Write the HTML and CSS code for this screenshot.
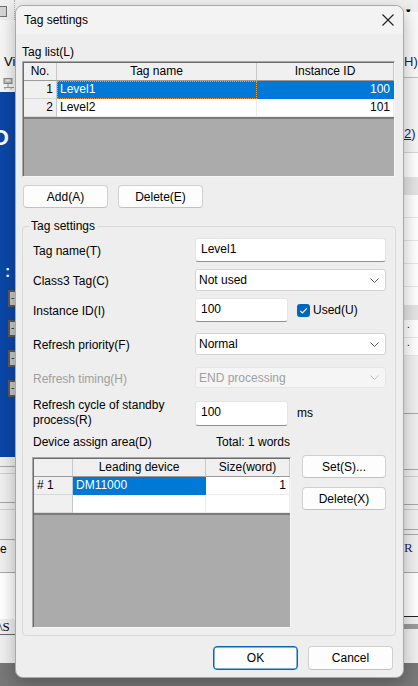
FILE: index.html
```html
<!DOCTYPE html>
<html lang="en">

<head>
  <meta charset="UTF-8" />
  <meta name="viewport" content="width=device-width, initial-scale=1.0" />
  <title>Tag settings</title>
  <link rel="stylesheet" href="styles.css">
</head>

<body>
  <div class="desk">
    <!-- main window behind the dialog, only the edges show -->
    <div class="side-left">
      <div class="l-top"><span class="l-icon"></span></div>
      <div class="l-menu">
        <div class="l-vi">Vi</div>
        <svg class="l-tool" width="12" height="12" viewBox="0 0 12 12">
          <rect x="1" y="0.5" width="8" height="5" fill="#b8b8b8" stroke="#8a8a8a" />
          <rect x="2.5" y="1.5" width="5" height="2" fill="#e6e6e6" />
          <path d="M5 6v3M1 9.5h10M2 9.5v2M8 9.5v2" stroke="#9a9a9a" fill="none" />
        </svg>
      </div>
      <div class="l-blue">
        <div class="l-title">D [</div>
        <div class="l-colon">:</div>
        <div class="l-box">-</div>
        <div class="l-box">-</div>
        <div class="l-box">-</div>
        <div class="l-box">-</div>
      </div>
      <div class="l-panel">
        <div class="band h10 line"></div>
        <div class="band h7 line-light"></div>
        <div class="band h29 line"></div>
        <div class="band h7 line-light"></div>
        <div class="band h30 line"></div>
        <div class="band h33 line l-e">e</div>
        <div class="band h46 white"></div>
        <div class="band h16 l-tab"><span>\S</span></div>
        <div class="band rest"></div>
      </div>
      <div class="foot"></div>
    </div>

    <div class="middle">
      <div class="m-top"></div>
      <div class="foot"></div>
    </div>

    <div class="side-right">
      <div class="r-top">&#9662;</div>
      <div class="r-a">H)</div>
      <div class="r-b"><u>2</u>)</div>
      <div class="band h25 white line-soft"></div>
      <div class="band h17 grey"></div>
      <div class="band h23 white line-soft"></div>
      <div class="band h23 white line-soft"></div>
      <div class="band h23 white line-soft"></div>
      <div class="band h23 white line-soft"></div>
      <div class="band h18 white"></div>
      <div class="band h15 grey"></div>
      <div class="band h18 white line-soft r-dot">.</div>
      <div class="band h18 white line-soft r-dot">.</div>
      <div class="band h58 line"></div>
      <div class="band h56 line"></div>
      <div class="band h7 line-light"></div>
      <div class="band h28 line"></div>
      <div class="band h5 line-light"></div>
      <div class="band h20 line"></div>
      <div class="band h5 line"></div>
      <div class="band h38 line r-r">R</div>
      <div class="band h44 white line-black"></div>
      <div class="band h7"></div>
      <div class="band h5 grey-dark"></div>
      <div class="band rest"></div>
      <div class="foot"></div>
    </div>

    <div class="dialog">
      <div class="titlebar">
        <span>Tag settings</span>
        <svg width="12" height="12" viewBox="0 0 12 12">
          <path d="M0.5 0.5L11.5 11.5M11.5 0.5L0.5 11.5" stroke="#1f1f1f" stroke-width="1.1" fill="none" />
        </svg>
      </div>

      <div class="dlg-body">
        <div class="caption">Tag list(L)</div>
        <div class="list tag-list">
          <div class="grid">
            <div class="gh">No.</div>
            <div class="gh">Tag name</div>
            <div class="gh">Instance ID</div>
            <div class="gn">1</div>
            <div class="gc sel focus">Level1</div>
            <div class="gc sel num">100</div>
            <div class="gn">2</div>
            <div class="gc">Level2</div>
            <div class="gc num">101</div>
          </div>
        </div>

        <div class="btn-row">
          <button class="btn">Add(A)</button>
          <button class="btn">Delete(E)</button>
        </div>

        <fieldset class="group">
          <legend>Tag settings</legend>

          <div class="form-row row-name">
            <label>Tag name(T)</label>
            <input class="text" type="text" value="Level1">
          </div>

          <div class="form-row row-class">
            <label>Class3 Tag(C)</label>
            <div class="combo">
              <span>Not used</span>
              <svg width="9" height="5" viewBox="0 0 9 5"><path d="M0.5 0.5L4.5 4.5L8.5 0.5" stroke="#5a5a5a" fill="none" /></svg>
            </div>
          </div>

          <div class="form-row row-id">
            <label>Instance ID(I)</label>
            <div class="inline">
              <input class="text short" type="text" value="100">
              <span class="check">
                <svg width="13" height="13" viewBox="0 0 13 13">
                  <rect width="13" height="13" rx="3" fill="#0067c0" />
                  <path d="M3.3 6.8L5.4 8.9L9.8 4.3" stroke="#fff" stroke-width="1.1" fill="none" />
                </svg>
              </span>
              <span>Used(U)</span>
            </div>
          </div>

          <div class="form-row row-prio">
            <label>Refresh priority(F)</label>
            <div class="combo">
              <span>Normal</span>
              <svg width="9" height="5" viewBox="0 0 9 5"><path d="M0.5 0.5L4.5 4.5L8.5 0.5" stroke="#5a5a5a" fill="none" /></svg>
            </div>
          </div>

          <div class="form-row row-timing">
            <label class="disabled">Refresh timing(H)</label>
            <div class="combo off">
              <span>END processing</span>
              <svg width="9" height="5" viewBox="0 0 9 5"><path d="M0.5 0.5L4.5 4.5L8.5 0.5" stroke="#c2c2c2" fill="none" /></svg>
            </div>
          </div>

          <div class="form-row row-cycle">
            <label>Refresh cycle of standby<br>process(R)</label>
            <div class="inline">
              <input class="text short tall" type="text" value="100">
              <span class="unit">ms</span>
            </div>
          </div>

          <div class="device-head">
            <span class="dh-label">Device assign area(D)</span>
            <span>Total: 1 words</span>
          </div>

          <div class="device-row">
            <div class="list dev-list">
              <div class="grid">
                <div class="gh"></div>
                <div class="gh">Leading device</div>
                <div class="gh">Size(word)</div>
                <div class="gn left"># 1</div>
                <div class="gc sel">DM11000</div>
                <div class="gc num">1</div>
                <div class="gn"></div>
                <div class="gc"></div>
                <div class="gc"></div>
              </div>
            </div>
            <div class="side-btns">
              <button class="btn">Set(S)...</button>
              <button class="btn">Delete(X)</button>
            </div>
          </div>
        </fieldset>

        <div class="footer">
          <button class="btn primary">OK</button>
          <button class="btn">Cancel</button>
        </div>
      </div>
    </div>
  </div>
</body>

</html>
```

FILE: styles.css
```css
body {
  margin: 0;
  font-family: "Liberation Sans", Arial, sans-serif;
  font-size: 12px;
  color: #000;
}

.desk {
  position: relative;
  width: 418px;
  height: 686px;
  overflow: hidden;
  display: flex;
  background: #f0f0f0;
}

.foot {
  height: 23px;
  background: #787878;
  flex: 0 0 23px;
}

/* left edge of main window */
.side-left {
  width: 15px;
  display: flex;
  flex-direction: column;
  overflow: hidden;
}

.l-top {
  height: 20px;
  background: #efefef;
  border-right: 1px dotted #b0b0b0;
  box-sizing: border-box;
}

.l-icon {
  display: block;
  width: 6px;
  height: 9px;
  margin-top: 6px;
  background: #d4d4d4;
  border: 1px solid #707070;
  border-left: none;
}

.l-menu {
  height: 72px;
  background: #f7f7f7;
}

.l-vi {
  padding: 35px 0 0 4px;
  line-height: 14px;
  font-size: 13px;
}

.l-tool {
  display: block;
  margin: 9px 0 0 3px;
}

.l-blue {
  height: 365px;
  background: #0b47a8;
  color: #fff;
  overflow: hidden;
}

.l-title {
  margin: 34px 0 0 -7px;
  font-size: 22px;
  font-weight: bold;
  white-space: nowrap;
  line-height: 24px;
}

.l-colon {
  margin: 114px 0 0 5px;
  font-size: 16px;
  font-weight: bold;
  line-height: 16px;
}

.l-box {
  width: 7px;
  height: 13px;
  margin: 10px 0 0 8px;
  background: #c8c8c8;
  border: 2px solid #5a5a5a;
  border-right: none;
  color: #333;
  font-size: 10px;
  line-height: 12px;
  text-indent: 1px;
  box-sizing: content-box;
}

.l-box + .l-box {
  margin-top: 13px;
}

.l-panel {
  height: 206px;
  display: flex;
  flex-direction: column;
}

.l-e {
  font-size: 12px;
  line-height: 14px;
  padding-top: 2px;
  box-sizing: border-box;
}

.l-tab {
  border-bottom: 1px solid #666;
  font-family: "Liberation Serif", serif;
  font-size: 13px;
  line-height: 15px;
  box-sizing: border-box;
}

.l-tab span {
  margin-left: -1px;
}

.middle {
  flex: 1;
  display: flex;
  flex-direction: column;
}

.m-top {
  flex: 1;
  background: #f0f0f0;
}

/* right edge of main window */
.side-right {
  width: 14px;
  display: flex;
  flex-direction: column;
  overflow: hidden;
}

.r-top {
  height: 12px;
  background: #efefef;
  font-size: 9px;
  line-height: 22px;
  padding-left: 2px;
  overflow: visible;
}

.r-a {
  height: 65px;
  background: #fafafa;
  border-bottom: 1px solid #bdbdbd;
  line-height: 100px;
  font-size: 13px;
  color: #1a1a6a;
  white-space: nowrap;
  overflow: hidden;
}

.r-b {
  height: 74px;
  background: #f6f6f6;
  border-bottom: 1px solid #d6d6d6;
  line-height: 112px;
  font-size: 13px;
  color: #1a1a6a;
  white-space: nowrap;
  overflow: hidden;
}

.band {
  flex: 0 0 auto;
  box-sizing: border-box;
}

.rest {
  flex: 1;
}

.h5 { height: 5px; }
.h7 { height: 7px; }
.h10 { height: 10px; }
.h15 { height: 15px; }
.h16 { height: 16px; }
.h17 { height: 17px; }
.h18 { height: 18px; }
.h20 { height: 20px; }
.h23 { height: 23px; }
.h25 { height: 25px; }
.h28 { height: 28px; }
.h29 { height: 29px; }
.h30 { height: 30px; }
.h33 { height: 33px; }
.h38 { height: 38px; }
.h44 { height: 44px; }
.h46 { height: 46px; }
.h56 { height: 56px; }
.h58 { height: 58px; }

.white { background: #fff; }
.grey { background: #e4e4e4; }
.grey-dark { background: #9c9c9c; }
.line { border-bottom: 1px solid #a8a8a8; }
.line-light { border-bottom: 1px solid #cfcfcf; }
.line-soft { border-bottom: 1px solid #e6e6e6; }
.line-black { border-bottom: 1px solid #222; }

.r-dot {
  font-size: 10px;
  line-height: 10px;
  padding-left: 3px;
}

.r-r {
  font-family: "Liberation Serif", serif;
  font-size: 13px;
  line-height: 16px;
  padding-top: 5px;
  color: #1a2a5a;
}

/* dialog */
.dialog {
  position: absolute;
  left: 15px;
  top: 5px;
  width: 389px;
  height: 673px;
  box-sizing: border-box;
  background: #eeeeee;
  border: 1px solid #a9a9a9;
  border-radius: 8px;
  box-shadow: 0 6px 18px rgba(0, 0, 0, 0.28);
}

.titlebar {
  height: 28px;
  display: flex;
  align-items: center;
  justify-content: space-between;
  padding: 0 9px 0 8px;
  background: #f3f3f3;
  border-radius: 8px 8px 0 0;
}

.dlg-body {
  padding: 0 7px 0 6px;
}

.caption {
  margin-top: 11px;
  line-height: 14px;
  margin-bottom: 2px;
}

.list {
  box-sizing: border-box;
  background: #ababab;
  border: 1px solid;
  border-color: #a8a8a8 #f6f6f6 #f6f6f6 #a8a8a8;
  box-shadow: inset 1px 1px 0 #6c6c6c;
  padding: 1px 0 0 1px;
}

.grid {
  display: grid;
  grid-auto-rows: 18px;
  background: #fff;
  border-bottom: 2px solid #7c7c7c;
}

.tag-list {
  width: 373px;
  height: 116px;
}

.tag-list .grid {
  grid-template-columns: 33px 200px 1fr;
}

.gh {
  background: #f0f0f0;
  border-right: 1px solid #c8c8c8;
  border-bottom: 1px solid #9a9a9a;
  text-align: center;
  line-height: 17px;
}

.gn {
  background: #f0f0f0;
  border-right: 1px solid #c8c8c8;
  border-bottom: 1px solid #d8d8d8;
  text-align: right;
  padding-right: 3px;
  line-height: 17px;
}

.gn.left {
  text-align: left;
  padding-left: 3px;
}

.gc {
  background: #fff;
  border-right: 1px solid #ececec;
  border-bottom: 1px solid #ececec;
  padding: 0 3px;
  line-height: 17px;
  white-space: nowrap;
  overflow: hidden;
}

.gc.num {
  text-align: right;
}

.gc.sel {
  background: #0078d7;
  color: #fff;
  border-color: #0078d7;
}

.gc.focus {
  outline: 1px dotted #f0a030;
  outline-offset: -1px;
}

.btn {
  height: 23px;
  width: 85px;
  padding: 0;
  background: #fdfdfd;
  border: 1px solid #d0d0d0;
  border-bottom-color: #c2c2c2;
  border-radius: 4px;
  font-family: inherit;
  font-size: 12px;
  color: #000;
}

.btn-row {
  display: flex;
  gap: 10px;
  margin: 8px 0 0 1px;
}

.group {
  margin: 11px 0 0;
  width: 374px;
  min-width: 0;
  box-sizing: border-box;
  border: 1px solid #d8d8d8;
  border-radius: 4px;
  padding: 0 9px 7px 10px;
}

.group legend {
  padding: 0 2px;
  margin-left: -4px;
  line-height: 14px;
}

.form-row {
  display: grid;
  grid-template-columns: 162px 1fr;
  align-items: center;
}

.form-row label {
  padding-top: 3px;
  line-height: 15px;
}

.form-row label.disabled {
  color: #9e9e9e;
}

.row-name { margin-top: 5px; }
.row-class { margin-top: 7px; }
.row-id { margin-top: 7px; }
.row-prio { margin-top: 11px; }
.row-timing { margin-top: 12px; }

.row-cycle {
  margin-top: 10px;
}

.row-cycle label {
  padding-top: 0;
}

.text {
  box-sizing: border-box;
  width: 100%;
  height: 24px;
  margin: 0;
  padding: 0 5px 3px;
  background: #fff;
  border: 1px solid #e4e4e4;
  border-bottom-color: #8e8e8e;
  border-radius: 3px;
  font-family: inherit;
  font-size: 12px;
  color: #000;
}

.text.short {
  width: 93px;
}

.text.tall {
  height: 25px;
}

.combo {
  box-sizing: border-box;
  height: 22px;
  display: flex;
  align-items: center;
  justify-content: space-between;
  padding: 0 6px 0 3px;
  background: #fff;
  border: 1px solid #d3d3d3;
  border-radius: 3px;
}

.combo.off {
  height: 21px;
  background: #f5f5f5;
  border-color: #e6e6e6;
  color: #a0a0a0;
}

.inline {
  display: flex;
  align-items: center;
}

.check {
  display: flex;
  margin: 0 3px 0 9px;
}

.unit {
  margin-left: 9px;
}

.device-head {
  display: flex;
  margin-top: 7px;
  line-height: 14px;
}

.dh-label {
  width: 183px;
}

.device-row {
  display: flex;
  margin-top: 8px;
}

.dev-list {
  width: 259px;
  height: 171px;
  margin-left: -1px;
}

.dev-list .grid {
  grid-template-columns: 39px 133px 1fr;
}

.side-btns {
  display: flex;
  flex-direction: column;
  gap: 9px;
  margin: -2px 0 0 11px;
}

.side-btns .btn {
  width: 84px;
}

.footer {
  display: flex;
  justify-content: flex-end;
  gap: 10px;
  margin-top: 10px;
  padding-right: 3px;
}

.footer .btn {
  height: 24px;
}

.btn.primary {
  border: 1px solid #0067c0;
  box-shadow: inset 0 0 0 0.5px #0067c0;
}
```
